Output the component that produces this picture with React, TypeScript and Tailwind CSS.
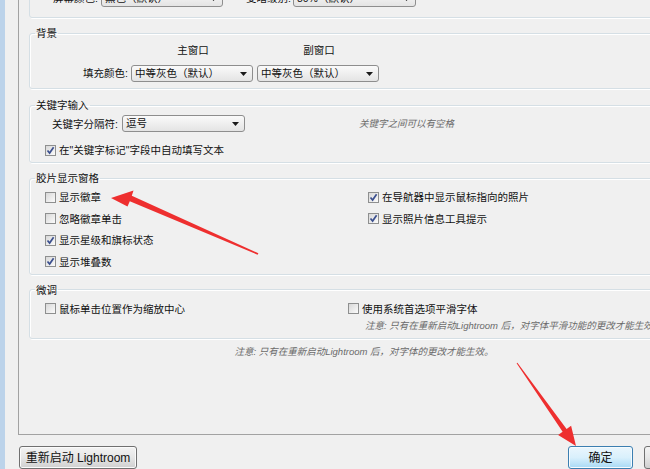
import React from 'react'

function Combo({ value, width }: { value: string; width: string }) {
  return (
    <div
      className={`${width} h-[17px] shrink-0 flex items-center justify-between rounded-[3px] border border-[#8e8e8e] bg-gradient-to-b from-[#fafafa] to-[#e4e4e4] pl-[3px] pr-[5px]`}
    >
      <span className="leading-[15px] whitespace-nowrap">{value}</span>
      <svg width="7" height="4" viewBox="0 0 7 4">
        <path d="M0 0H7L3.5 4Z" fill="#1a1a1a" />
      </svg>
    </div>
  )
}

function Check({ checked, label }: { checked?: boolean; label: string }) {
  return (
    <div className="h-[16px] flex items-center gap-[3px]">
      <span className="w-[11px] h-[11px] shrink-0 border border-[#8e8f8f] bg-gradient-to-br from-[#d8d8d8] to-[#fbfbfb] flex items-center justify-center">
        {checked && (
          <svg width="9" height="9" viewBox="0 0 9 9">
            <path d="M1.5 4.5L3.6 7L7.6 1.2" fill="none" stroke="#3b4f8e" strokeWidth="1.7" />
          </svg>
        )}
      </span>
      <span className="leading-[16px] whitespace-nowrap">{label}</span>
    </div>
  )
}

function Group({ title, className, children }: { title: string; className: string; children: React.ReactNode }) {
  return (
    <fieldset className={`min-w-0 border border-[#d5dfe5] rounded-[3px] shadow-[inset_1px_1px_0_#ffffff,1px_1px_0_#ffffff] ${className}`}>
      <legend className="ml-[5px] px-[1px] leading-[14px]">{title}</legend>
      {children}
    </fieldset>
  )
}

function Note({ text }: { text: string }) {
  return <span className="italic text-[9.5px] leading-[16px] text-[#6a6a6a] whitespace-nowrap">{text}</span>
}

export default function App() {
  return (
    <div className="relative w-[650px] h-[469px] overflow-hidden bg-[#f0f0f0] flex text-[10.5px] text-[#111] font-['Liberation_Sans','Noto_Sans_CJK_SC',sans-serif]">
      {/* window frame */}
      <div className="w-[5px] shrink-0 bg-[#bcd3ea]" />

      <div className="pl-[13px] w-[720px] shrink-0 flex flex-col">
        {/* tab page */}
        <div className="w-[691px] h-[440px] border-l border-b border-[#a2a2a2] pl-[10px] pr-[10px] flex flex-col">
          {/* 屏幕 (partially visible) */}
          <div className="-mt-[11px] border border-[#d5dfe5] rounded-[3px] pl-[1px] pb-[10px] shadow-[1px_1px_0_#ffffff]">
            <div className="h-[17px] flex items-center">
              <span className="w-[67px] text-right whitespace-nowrap">屏幕颜色:</span>
              <div className="w-[3px]" />
              <Combo value="黑色（默认）" width="w-[122px]" />
              <span className="ml-[23px] whitespace-nowrap">变暗级别:</span>
              <div className="w-[2px]" />
              <Combo value="80%（默认）" width="w-[123px]" />
            </div>
          </div>

          {/* 背景 */}
          <Group title="背景" className="mt-[8px]">
            <div className="pt-[2px] pb-[6px]">
              <div className="grid grid-cols-[98px_122px_122px] gap-x-[4px] h-[16px] leading-[16px]">
                <span />
                <span className="text-center">主窗口</span>
                <span className="text-center">副窗口</span>
              </div>
              <div className="mt-[7px] flex items-center">
                <span className="w-[98px] text-right whitespace-nowrap">填充颜色:</span>
                <div className="w-[3px]" />
                <Combo value="中等灰色（默认）" width="w-[122px]" />
                <div className="w-[4px]" />
                <Combo value="中等灰色（默认）" width="w-[122px]" />
              </div>
            </div>
          </Group>

          {/* 关键字输入 */}
          <Group title="关键字输入" className="mt-[9px]">
            <div className="pt-[3px] pb-[4px]">
              <div className="h-[17px] flex items-center pl-[22px]">
                <span className="whitespace-nowrap leading-[16px]">关键字分隔符:</span>
                <div className="w-[4px]" />
                <Combo value="逗号" width="w-[123px]" />
                <span className="ml-[114px]">
                  <Note text="关键字之间可以有空格" />
                </span>
              </div>
              <div className="mt-[10px] pl-[15px]">
                <Check checked label={'在"关键字标记"字段中自动填写文本'} />
              </div>
            </div>
          </Group>

          {/* 胶片显示窗格 */}
          <Group title="胶片显示窗格" className="mt-[8px]">
            <div className="pt-[4px] pb-[4px] pl-[15px] grid grid-cols-[323px_1fr]">
              <div className="flex flex-col gap-[5.5px]">
                <Check label="显示徽章" />
                <Check label="忽略徽章单击" />
                <Check checked label="显示星级和旗标状态" />
                <Check checked label="显示堆叠数" />
              </div>
              <div className="flex flex-col gap-[5.5px]">
                <Check checked label="在导航器中显示鼠标指向的照片" />
                <Check checked label="显示照片信息工具提示" />
              </div>
            </div>
          </Group>

          {/* 微调 */}
          <Group title="微调" className="mt-[8px]">
            <div className="pt-[4px] pb-[4px] pl-[15px] grid grid-cols-[303px_1fr]">
              <Check label="鼠标单击位置作为缩放中心" />
              <div className="flex flex-col">
                <Check label="使用系统首选项平滑字体" />
                <div className="h-[16px] mt-[1px] pl-[17px] flex items-center">
                  <Note text="注意: 只有在重新启动Lightroom 后，对字体平滑功能的更改才能生效。" />
                </div>
              </div>
            </div>
          </Group>

          <div className="mt-[5px] h-[16px] flex items-center justify-center">
            <Note text="注意: 只有在重新启动Lightroom 后，对字体的更改才能生效。" />
          </div>
        </div>

        {/* buttons */}
        <div className="w-[691px] mt-[11px] pl-[1px] flex justify-between text-[12px]">
          <button className="w-[118px] h-[23px] rounded-[3px] border border-[#707070] bg-gradient-to-b from-[#f3f3f3] via-[#e6e6e6] to-[#d0d0d0] leading-[20px] shadow-[inset_0_0_0_1px_#fbfbfb]">
            重新启动 Lightroom
          </button>
          <div className="flex gap-[11px]">
            <button className="w-[65px] h-[23px] rounded-[3px] border border-[#3c7fb1] bg-gradient-to-b from-[#eaf6fd] via-[#d9f0fc] to-[#a7d9f5] leading-[20px] shadow-[inset_0_0_0_1px_#f6fbfe]">
              确定
            </button>
            <button className="w-[65px] h-[23px] rounded-[3px] border border-[#707070] bg-gradient-to-b from-[#f3f3f3] via-[#e6e6e6] to-[#d0d0d0] leading-[20px]">
              取消
            </button>
          </div>
        </div>
      </div>

      {/* red annotation arrows */}
      <svg className="absolute inset-0 pointer-events-none" width="650" height="469" viewBox="0 0 650 469">
        <polygon
          points="111,198 133.5,190.5 131.8,195.8 258.4,253.3 257.6,254.7 129.8,201.2 127.5,206.5"
          fill="#ee2f2f"
        />
        <polygon
          points="576,446 571.1,425.7 566.6,428.9 517.4,362.7 516.6,363.3 562.6,431.7 558.1,434.9"
          fill="#ee2f2f"
        />
      </svg>
    </div>
  )
}
